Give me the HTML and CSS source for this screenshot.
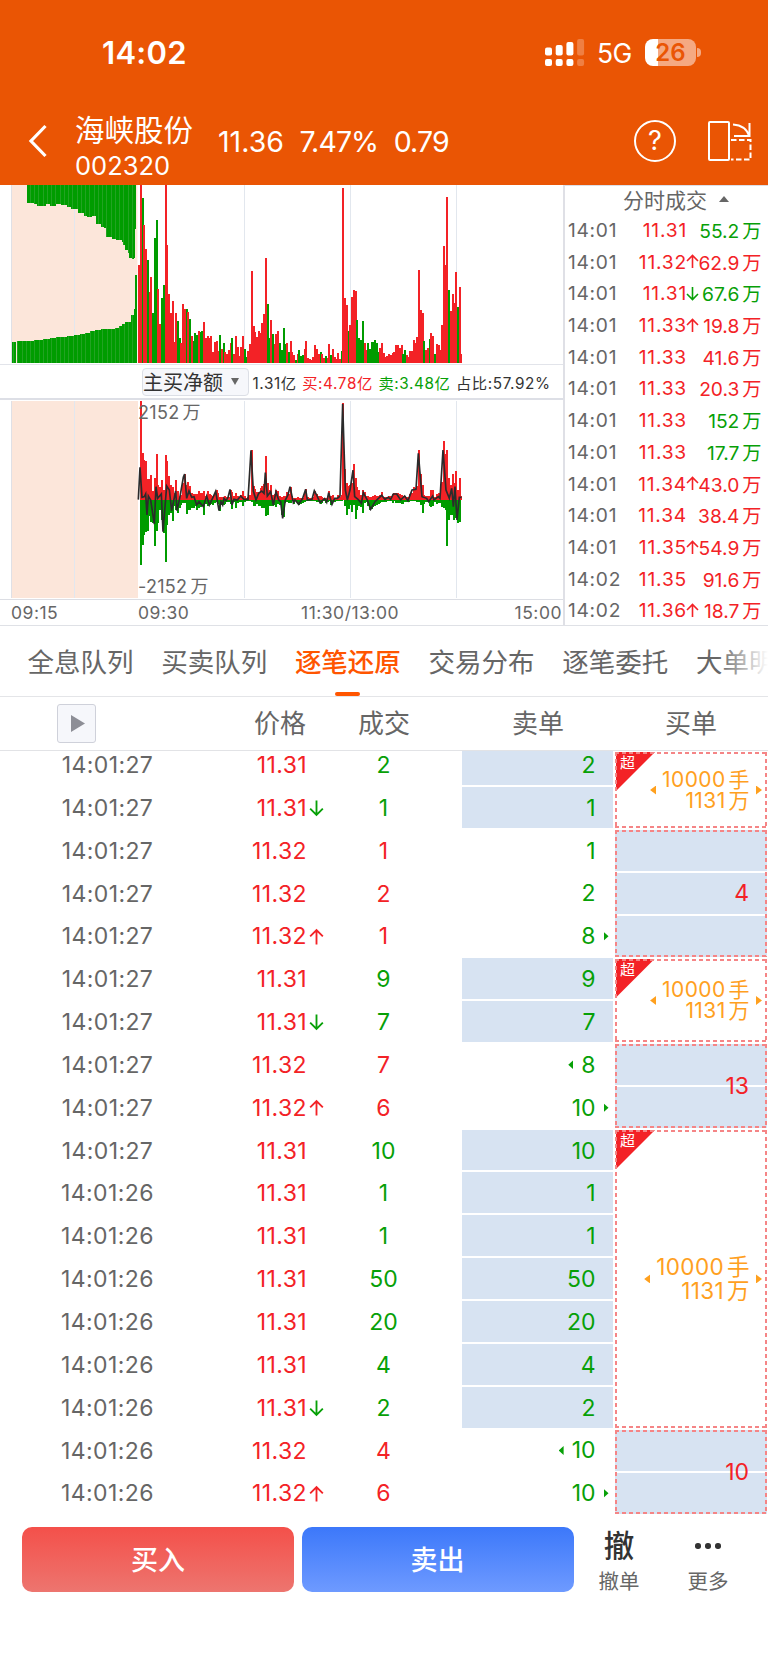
FILE: index.html
```html
<!DOCTYPE html>
<html lang="zh-CN">
<head>
    <meta charset="UTF-8">
    <meta name="viewport" content="width=device-width, initial-scale=1.0">
    <title>海峡股份 002320</title>
    <link rel="stylesheet" href="styles.css">
</head>
<body>
    <header>
        <div class="status">
            <div class="clock">14:02</div>
            <svg class="signal" width="40" height="28" viewBox="0 0 40 28" fill="#fff">
                <rect x="0" y="8.5" width="7" height="8" rx="2"/>
                <rect x="10.7" y="6" width="7" height="10.5" rx="2"/>
                <rect x="21.4" y="3" width="7" height="13.5" rx="2"/>
                <rect x="32.1" y="0" width="7" height="16.5" rx="2" opacity=".25"/>
                <rect x="0" y="20" width="7" height="7" rx="2"/>
                <rect x="10.7" y="20" width="7" height="7" rx="2"/>
                <rect x="21.4" y="20" width="7" height="7" rx="2"/>
                <rect x="32.1" y="20" width="7" height="7" rx="2" opacity=".25"/>
            </svg>
            <div class="network">5G</div>
            <div class="battery">26</div>
            <div class="battery-cap"></div>
        </div>
        <div class="nav">
            <svg class="back" width="20" height="34" viewBox="0 0 20 34"><path d="M17.5 2 L3 17 L17.5 32" fill="none" stroke="#fff" stroke-width="3.2"/></svg>
            <div class="stock">
                <div class="stock-name">海峡股份</div>
                <div class="stock-code">002320</div>
            </div>
            <div class="quote"><span>11.36</span><span class="tight">7.47%</span><span class="tight">0.79</span></div>
            <div class="help">?</div>
            <svg class="rotate" width="46" height="42" viewBox="0 0 46 42" fill="none" stroke="#fff" stroke-width="2">
                <rect x="2" y="2" width="20" height="38" rx="1"/>
                <path d="M26 4.5 C34 5 40 9 42.5 16.5 M42.5 3 V17 M27 16 H43.5"/>
                <path d="M24 20 H43.5 V39.5 H24" stroke-dasharray="5.5 2.5"/>
            </svg>
        </div>
    </header>

    <section class="market">
        <div class="charts">
            <svg id="volumeChart" width="563" height="179" viewBox="0 -3 1689 537"></svg>
            <div class="indicator">
                <button class="select">主买净额<i class="tri down"></i></button>
                <span>1.31<b>亿</b></span>
                <span class="red">买:4.78<b>亿</b></span>
                <span class="green">卖:3.48<b>亿</b></span>
                <span>占比:57.92%</span>
            </div>
            <div class="net">
                <svg id="netChart" width="563" height="198" viewBox="0 0 1689 594"></svg>
                <div class="scale top">2152<b>万</b></div>
                <div class="scale bottom">-2152<b>万</b></div>
            </div>
            <div class="axis"><span>09:15</span><span>09:30</span><span>11:30/13:00</span><span>15:00</span></div>
        </div>
        <div class="deals">
            <div class="deals-title">分时成交<i class="tri up"></i></div>
            <div id="deals"></div>
        </div>
    </section>

    <nav class="tabs">
        <a>全息队列</a>
        <a>买卖队列</a>
        <a class="active">逐笔还原</a>
        <a>交易分布</a>
        <a>逐笔委托</a>
        <a>大单明细</a>
    </nav>

    <div class="thead">
        <button class="play"><i></i></button>
        <span class="h-price">价格</span>
        <span class="h-vol">成交</span>
        <span class="h-sell">卖单</span>
        <span class="h-buy">买单</span>
    </div>
    <div class="orders">
        <div id="ticks"></div>
        <div id="buys"></div>
    </div>

    <footer>
        <button class="buy">买入</button>
        <button class="sell">卖出</button>
        <div class="tool"><div class="tool-icon">撤</div><div>撤单</div></div>
        <div class="tool more"><div class="tool-icon dots"><i></i><i></i><i></i></div><div>更多</div></div>
    </footer>

    <script src="script.js"></script>
</body>
</html>
```

FILE: styles.css
```css
* {
    box-sizing: border-box;
}
body {
    margin: 0;
    width: 768px;
    height: 1665px;
    overflow: hidden;
    background: #fff;
    color: #666;
    font-family: Inter, "Noto Sans CJK SC", sans-serif;
}
b, i {
    font-weight: inherit;
    font-style: normal;
}
button {
    padding: 0;
    border: none;
    font-family: inherit;
    color: inherit;
}
svg {
    display: block;
}
.red {
    color: #f32226;
}
.green {
    color: #07a007;
}
header {
    height: 185px;
    background: #ea5504;
    color: #fff;
}
.status {
    display: flex;
    align-items: center;
    height: 97px;
    padding: 8px 0 0 102px;
}
.clock {
    width: 443px;
    font-size: 31px;
    font-weight: 600;
    letter-spacing: 0.3px;
}
.network {
    width: 48px;
    margin-left: 12px;
    font-size: 26.5px;
    letter-spacing: -0.5px;
}
.battery {
    width: 51px;
    height: 27px;
    border-radius: 8px;
    background: linear-gradient(90deg, #fff 13px, #f5a982 13px);
    color: #ea5504;
    font-size: 24px;
    font-weight: 600;
    line-height: 27px;
    text-align: center;
}
.battery-cap {
    width: 4px;
    height: 9px;
    margin-left: 1px;
    border-radius: 0 4px 4px 0;
    background: #f5a982;
}
.nav {
    display: flex;
    align-items: center;
    height: 88px;
    padding-left: 28px;
}
.stock {
    width: 142px;
    margin: 14px 0 0 27px;
    line-height: 35.5px;
}
.stock-name {
    font-size: 29.5px;
}
.stock-code {
    font-size: 25.5px;
}
.quote {
    display: flex;
    gap: 15.5px;
    width: 417px;
    padding-left: 1px;
    font-size: 28.5px;
}
.quote .tight {
    letter-spacing: -0.9px;
}
.help {
    width: 42px;
    height: 42px;
    border: 2px solid #fff;
    border-radius: 50%;
    font-size: 27px;
    line-height: 38px;
    text-align: center;
}
.rotate {
    margin-left: 31px;
}

/* charts */
.market {
    display: flex;
    height: 441px;
    border-bottom: 1px solid #dfe1e6;
}
.charts {
    width: 563px;
}
.charts rect {
    shape-rendering: crispEdges;
}
.indicator {
    display: flex;
    align-items: center;
    gap: 5.5px;
    height: 36px;
    padding-left: 142px;
    border-top: 1px solid #e2e4ea;
    border-bottom: 2px solid #dddfe6;
    color: #333;
    font-size: 15.3px;
    letter-spacing: 0.6px;
    white-space: nowrap;
}
.indicator .red {
    color: #f32226;
}
.indicator .green {
    color: #07a007;
}
.select {
    display: flex;
    align-items: center;
    justify-content: space-between;
    width: 107px;
    height: 28px;
    margin-right: -2px;
    padding-right: 9px;
    border: 1px solid #dcdfe6;
    border-radius: 4px;
    background: #f6f7fb;
    font-size: 20px;
}
.tri {
    width: 8px;
    height: 7px;
    background: #666;
}
.tri.down {
    clip-path: polygon(0 0, 100% 0, 50% 100%);
}
.tri.up {
    width: 10px;
    height: 6px;
    clip-path: polygon(50% 0, 100% 100%, 0 100%);
}
.net {
    position: relative;
    height: 200px;
    padding-top: 1px;
    border-bottom: 1px solid #dcdee4;
}
.scale {
    position: absolute;
    left: 138px;
    font-size: 18px;
    line-height: 20px;
    letter-spacing: 0.3px;
}
.scale b {
    margin-left: 3px;
}
.scale.top {
    top: 3px;
}
.scale.bottom {
    bottom: 2px;
}
.axis {
    display: grid;
    grid-template-columns: 127px 130px 131px 1fr;
    padding: 0 1px 0 11px;
    font-size: 17.5px;
    line-height: 26px;
    letter-spacing: 0.5px;
}
.axis span:nth-child(3) {
    text-align: right;
}
.axis span:last-child {
    text-align: right;
}
.deals {
    width: 205px;
    border-top: 1px solid #dcdee6;
    border-left: 2px solid #dfe0e6;
}
.deals-title {
    display: flex;
    align-items: center;
    gap: 12px;
    height: 28px;
    padding: 0 0 2px 58px;
    font-size: 21px;
}
.deal {
    display: grid;
    grid-template-columns: 51px 67px 14px 1fr;
    align-items: center;
    height: 31.72px;
    padding: 0 6.5px 0 3px;
    font-size: 19.2px;
    white-space: nowrap;
}
.deal span:nth-child(1) {
    letter-spacing: 0.7px;
}
.deal span:nth-child(2) {
    margin-right: -1px;
    letter-spacing: 0.8px;
}
.deal span:nth-child(2), .deal span:last-child {
    text-align: right;
}
.deal span:last-child {
    margin-left: -8px;
}
.deal b {
    margin-left: 3px;
}
.arrow {
    fill: none;
    stroke: currentColor;
    stroke-width: 1.6;
}

/* tabs */
.tabs {
    position: relative;
    display: flex;
    gap: 27.7px;
    height: 71px;
    padding-left: 27.5px;
    border-bottom: 1px solid #e4e5e8;
    overflow: hidden;
    font-size: 26.5px;
    line-height: 73px;
    white-space: nowrap;
}
.tabs::after {
    content: "";
    position: absolute;
    top: 0;
    right: 0;
    width: 50px;
    height: 70px;
    background: linear-gradient(90deg, transparent, #fff);
}
.tabs a {
    display: flex;
    flex-direction: column;
    align-items: center;
}
.tabs .active {
    color: #ff5500;
    font-weight: 500;
}
.tabs .active::after {
    content: "";
    width: 25px;
    height: 4px;
    margin-top: -7px;
    border-radius: 2px;
    background: #ff5500;
}
.thead {
    display: flex;
    align-items: center;
    height: 54px;
    padding-left: 57px;
    border-bottom: 1px solid #e2e3e6;
    font-size: 26px;
    line-height: 38px;
}
.play {
    display: flex;
    align-items: center;
    justify-content: center;
    width: 39px;
    height: 39px;
    border: 1px solid #cfd1da;
    border-radius: 3px;
    background: #f6f7fb;
}
.play i {
    width: 14px;
    height: 17px;
    margin-left: 3px;
    background: #8d8e96;
    clip-path: polygon(0 0, 100% 50%, 0 100%);
}
.h-price {
    margin-left: 158px;
}
.h-vol {
    margin-left: 52px;
}
.h-sell {
    margin-left: 102px;
}
.h-buy {
    margin-left: 101px;
}

/* order queue */
.orders {
    display: flex;
    height: 764px;
    overflow: hidden;
    font-size: 23px;
}
#ticks {
    width: 613px;
    margin-top: -8px;
}
.tick {
    display: grid;
    grid-template-columns: 215px 91px 36px 83px 37px 151px;
    grid-template-rows: 42.85px;
    line-height: 45px;
}
.tick .time {
    letter-spacing: 0.4px;
    text-align: center;
}
.tick .price {
    margin-right: -1px;
    letter-spacing: 0.4px;
    text-align: right;
}
.tick .dir {
    display: flex;
    align-items: center;
    padding: 2px 0 0 3px;
}
.tick .vol {
    text-align: center;
}
.tick .amount {
    grid-column: 6;
    display: flex;
    align-items: center;
    justify-content: flex-end;
    margin: 1px 0.5px 1px 0;
    padding: 1px 4px 0 0;
    line-height: 38px;
}
.tick .amount.same {
    background: #d7e3f2;
}
.amount i {
    width: 5px;
    height: 9px;
    background: currentColor;
}
.amount .from {
    margin-right: 8px;
    clip-path: polygon(0 50%, 100% 0, 100% 100%);
}
.amount .to {
    margin-left: 8px;
    clip-path: polygon(0 0, 100% 50%, 0 100%);
}
.amount .none {
    visibility: hidden;
}
#buys {
    width: 152px;
    margin-left: 2px;
    padding-top: 1px;
}
.group {
    padding-bottom: 2px;
}
.box {
    position: relative;
    display: flex;
    flex-direction: column;
    gap: 2px;
    height: 100%;
}
.box::after {
    content: "";
    position: absolute;
    inset: 0;
    background:
        repeating-linear-gradient(90deg, #f58586 0 4px, transparent 4px 7px) 0 0 / 100% 2px no-repeat,
        repeating-linear-gradient(90deg, #f58586 0 4px, transparent 4px 7px) 0 100% / 100% 2px no-repeat,
        repeating-linear-gradient(#f58586 0 4px, transparent 4px 7px) 0 0 / 2px 100% no-repeat,
        repeating-linear-gradient(#f58586 0 4px, transparent 4px 7px) 100% 0 / 2px 100% no-repeat;
}
.cell {
    flex: 1;
    background: #d7e3f2;
}
.total {
    position: absolute;
    top: 50%;
    right: 18px;
    transform: translateY(-50%);
}
.flag {
    position: absolute;
    top: 0;
    left: 1px;
    width: 39px;
    height: 39px;
    padding: 3px 0 0 4px;
    background: #f32226;
    clip-path: polygon(0 0, 100% 0, 0 100%);
    color: #fff;
    font-size: 15px;
    line-height: 16px;
}
.super {
    display: flex;
    align-items: center;
    justify-content: flex-end;
    gap: 6px;
    flex: 1;
    padding-right: 5px;
    color: #ffa01e;
    font-size: 21px;
    line-height: 21.5px;
    letter-spacing: 0.4px;
    text-align: right;
}
.super.large {
    font-size: 22.5px;
    line-height: 23.5px;
}
.super b {
    margin-left: 3px;
}
.super i {
    width: 6px;
    height: 9px;
    background: currentColor;
}
.super .from {
    clip-path: polygon(0 50%, 100% 0, 100% 100%);
}
.super .to {
    clip-path: polygon(0 0, 100% 50%, 0 100%);
}

footer {
    display: flex;
    height: 77px;
    padding: 12px 0 0 22px;
}
footer button {
    width: 272px;
    height: 65px;
    margin-right: 7.5px;
    padding-bottom: 3px;
    border-radius: 10px;
    color: #fff;
    font-size: 27px;
    font-weight: 500;
}
.buy {
    background: linear-gradient(#f4504a, #ed756f);
}
.sell {
    background: linear-gradient(#3c78fa, #6e9aff);
}
.tool {
    width: 42px;
    margin-left: 17px;
    font-size: 20.5px;
    line-height: 32px;
    text-align: center;
    white-space: nowrap;
}
.tool.more {
    margin-left: 47px;
}
.tool-icon {
    height: 39px;
    color: #333;
    font-size: 30.5px;
    font-weight: 500;
    line-height: 38px;
}
.dots {
    display: flex;
    align-items: center;
    justify-content: center;
    gap: 4.5px;
    padding-bottom: 1px;
}
.dots i {
    width: 5.5px;
    height: 5.5px;
    border-radius: 50%;
    background: #333;
}
```

FILE: script.js
```js
const RED = "#f32226";
const GREEN = "#009c00";
const STEP = 5.284;
const OPEN = 417;

// volume per minute, negative = green bar
const volume = [
    295, 540, -495, 413, 342, -310, 213, 259, -149, -375, -430, 221, 117, -194, -233, 540, 354, 207, 149, 186,
    63, 149, -127, -74, 60, 176, 163, -162, 153, -133, 82, -67, -89, -83, 97, -92, -96, 124, 74, 82,
    75, 81, 32, 62, 67, 37, -84, 41, -60, 33, 28, 40, 60, -74, 26, 82, 49, 21, 49, 82,
    -42, -18, 35, 56, 275, 111, 93, 78, 95, 91, 119, 148, 315, -176, -75, 129, -87, 57, 87, 96,
    -60, -40, -106, -57, 60, -34, 65, 33, 25, -9, 26, -40, -22, -23, 42, 67, 15, 12, 10, 19,
    54, 41, 27, -33, 27, 14, -22, 15, 58, -23, 42, 18, 12, 30, 13, -35, 525, 195, 173, -95,
    115, 197, 219, 217, -128, -76, -68, -125, 60, 39, -60, -41, -63, -63, -69, -60, -34, 44, 61, 29,
    19, 20, 26, 25, 31, 34, 55, 55, 45, 54, -27, -39, 24, 19, 35, 37, 69, 61, 78, 279,
    160, 151, -66, 39, 45, -71, 90, 82, -28, 56, 53, 38, 115, 351, 295, 497, -219, 156, 207, 180,
    272, -169, 229, 27
];
const buyIn = [
    0, 295, 139, 118, 115, 62, 62, 74, 27, 65, 137, 45, 39, 58, 30, 135, 117, 70, 45, 38,
    20, 58, 25, 12, 15, 50, 78, 43, 54, 42, 20, 18, 18, 18, 26, 20, 21, 26, 10, 26,
    18, 15, 10, 20, 28, 20, 8, 8, 7, 10, 8, 8, 30, 22, 10, 20, 12, 8, 15, 27,
    10, 6, 8, 15, 150, 42, 32, 24, 24, 36, 40, 48, 130, 50, 28, 44, 15, 18, 28, 25,
    12, 8, 10, 10, 22, 16, 38, 12, 5, 5, 8, 4, 5, 6, 18, 32, 8, 5, 4, 8,
    26, 18, 12, 12, 8, 5, 5, 6, 25, 12, 14, 6, 5, 14, 8, 15, 290, 91, 50, 40,
    45, 50, 106, 65, 38, 28, 15, 30, 22, 12, 10, 8, 8, 12, 14, 12, 10, 15, 24, 8,
    8, 8, 10, 10, 16, 20, 20, 20, 18, 14, 10, 10, 8, 8, 16, 20, 38, 35, 40, 150,
    78, 45, 15, 12, 12, 12, 28, 30, 8, 18, 20, 20, 53, 177, 138, 150, 66, 45, 78, 50,
    87, 28, 64, 10
];
const sellOut = [
    0, 196, 135, 107, 96, 93, 50, 68, 70, 138, 95, 70, 30, 60, 100, 186, 75, 45, 40, 65,
    20, 30, 40, 25, 15, 10, 10, 43, 30, 30, 25, 25, 18, 30, 25, 22, 20, 45, 12, 20,
    15, 14, 16, 10, 8, 12, 35, 15, 15, 12, 8, 8, 14, 27, 8, 25, 10, 8, 8, 20,
    6, 5, 5, 5, 6, 18, 18, 14, 20, 18, 25, 25, 48, 47, 20, 18, 20, 15, 22, 12,
    15, 45, 52, 10, 8, 10, 10, 5, 14, 4, 12, 16, 14, 10, 6, 5, 4, 4, 5, 5,
    5, 6, 6, 12, 10, 5, 10, 6, 5, 15, 6, 6, 5, 5, 4, 4, 0, 18, 45, 28,
    15, 36, 15, 58, 30, 20, 22, 40, 10, 8, 20, 30, 28, 22, 20, 15, 12, 10, 8, 6,
    6, 5, 5, 4, 9, 4, 10, 9, 10, 14, 12, 8, 6, 6, 4, 4, 4, 5, 6, 8,
    15, 40, 12, 6, 8, 20, 22, 18, 8, 12, 10, 10, 22, 25, 32, 138, 60, 45, 47, 62,
    55, 70, 68, 0
];
const netLine = "415,329 420,232 426,322 433,320 437,312 441,375 445,318 452,330 463,402 468,290 473,325 484,312 489,425 500,288 508,300 515,362 527,303 531,362 540,320 550,262 554,252 560,325 567,303 575,322 582,320 590,345 597,335 610,350 620,318 628,345 640,320 647,304 657,362 663,335 668,345 672,325 678,332 684,322 690,298 696,345 702,328 712,330 722,318 732,328 744,328 753,181 760,303 768,330 776,310 785,303 792,310 796,248 802,318 812,305 820,345 828,305 836,330 842,335 848,385 856,330 864,315 870,290 880,338 885,330 896,343 908,325 917,298 922,330 936,328 943,302 950,315 960,338 974,326 980,337 986,308 996,343 1004,325 1012,325 1020,318 1028,42 1036,300 1042,330 1050,300 1059,240 1064,320 1074,328 1084,340 1090,308 1102,330 1112,358 1125,335 1145,316 1155,328 1165,322 1172,328 1180,312 1190,312 1202,330 1214,318 1224,332 1236,300 1248,298 1255,190 1266,320 1280,325 1286,335 1298,318 1302,330 1315,320 1320,325 1329,180 1338,300 1348,325 1355,295 1360,350 1365,290 1371,390 1378,322 1385,322";

// call auction outline: [x, y] steps
const auctionTop = [[81, 50], [102, 53], [110, 59], [122, 61], [136, 55], [150, 61], [164, 55], [184, 56], [200, 62], [212, 68], [235, 81], [250, 90], [260, 93], [278, 90], [291, 113], [300, 122], [310, 127], [320, 153], [334, 158], [348, 163], [364, 169], [370, 177], [376, 191], [384, 202], [388, 217], [395, 218], [400, 215], [404, 130]];
const auctionBottom = [[35, 63], [52, 65], [75, 67], [102, 69], [128, 72], [150, 74], [165, 79], [190, 78], [200, 81], [222, 84], [240, 87], [258, 90], [270, 97], [285, 100], [304, 103], [345, 106], [356, 111], [366, 118], [375, 123], [392, 127], [394, 144], [399, 161], [404, 263]];

function rect(x, y, w, h, fill) {
    return `<rect x="${x.toFixed(1)}" y="${y}" width="${w}" height="${h}" fill="${fill}"/>`;
}

function grid(y, h) {
    let s = rect(33, y, 382, h, "#fce6da") + rect(33, y, 3, h, "#dfe0e6");
    [223, 732, 1050, 1368].forEach(x => s += rect(x, y, 3, h, "#e2e7ee"));
    return s;
}

function levelAt(levels, x) {
    let v = levels[0][1];
    levels.forEach(l => { if (x >= l[0]) v = l[1]; });
    return v;
}

function drawVolume() {
    const base = 531;
    let s = grid(-3, base + 3) + rect(411, -3, 4, base + 3, "#fff4ee");
    for (let x = 81; x < 408; x += 4.25) {
        const h = levelAt(auctionTop, x + 2) + 3;
        s += rect(x, -3, 5, h, GREEN);
        if (Math.round(x / 4.25) % 3 === 0) s += rect(x, -3, 3, h, "#22a322");
    }
    for (let x = 35; x < 408; x += 4.25) {
        if (x > 45 && x < 51) continue;
        const h = levelAt(auctionBottom, x + 2);
        s += rect(x, base - h, 5, h, GREEN);
        if (Math.round(x / 4.25) % 3 === 0) s += rect(x, base - h, 3, h, "#22a322");
    }
    volume.forEach((v, i) => {
        const h = Math.min(Math.abs(v), base + 3);
        s += rect(OPEN - 2.8 + i * STEP, base - h, 6, h, v > 0 ? RED : GREEN);
    });
    document.getElementById("volumeChart").innerHTML = s;
}

function drawNet() {
    const zero = 296;
    let s = grid(0, 591);
    buyIn.forEach((v, i) => {
        const x = OPEN - 2.8 + i * STEP;
        s += rect(x, zero - v, 6, v, RED) + rect(x, zero, 6, sellOut[i], GREEN);
    });
    s += `<polyline points="${netLine}" transform="translate(0 -33)" fill="none" stroke="#2b2b2b" stroke-width="5"/>`;
    document.getElementById("netChart").innerHTML = s;
}

function arrow(dir, w, h) {
    if (!dir) return "";
    const d = dir === "u" ? "M6.5 14 V1.5 M1 7 L6.5 1.5 L12 7" : "M6.5 1 V13.5 M1 8 L6.5 13.5 L12 8";
    return `<svg class="arrow ${dir === "u" ? "red" : "green"}" width="${w}" height="${h}" viewBox="0 0 13 15"><path d="${d}"/></svg>`;
}

// time, price, direction, amount, colour
const deals = [
    ["14:01", "11.31", "", "55.2", "green"],
    ["14:01", "11.32", "u", "62.9", "red"],
    ["14:01", "11.31", "d", "67.6", "green"],
    ["14:01", "11.33", "u", "19.8", "red"],
    ["14:01", "11.33", "", "41.6", "red"],
    ["14:01", "11.33", "", "20.3", "red"],
    ["14:01", "11.33", "", "152", "green"],
    ["14:01", "11.33", "", "17.7", "green"],
    ["14:01", "11.34", "u", "43.0", "red"],
    ["14:01", "11.34", "", "38.4", "red"],
    ["14:01", "11.35", "u", "54.9", "red"],
    ["14:02", "11.35", "", "91.6", "red"],
    ["14:02", "11.36", "u", "18.7", "red"]
];

// time, price, direction, volume, colour, sell order, state (same / from / to)
const ticks = [
    ["27", "11.31", "", 2, "green", 2, "same"],
    ["27", "11.31", "d", 1, "green", 1, "same"],
    ["27", "11.32", "", 1, "red", 1, ""],
    ["27", "11.32", "", 2, "red", 2, ""],
    ["27", "11.32", "u", 1, "red", 8, "to"],
    ["27", "11.31", "", 9, "green", 9, "same"],
    ["27", "11.31", "d", 7, "green", 7, "same"],
    ["27", "11.32", "", 7, "red", 8, "from"],
    ["27", "11.32", "u", 6, "red", 10, "to"],
    ["27", "11.31", "", 10, "green", 10, "same"],
    ["26", "11.31", "", 1, "green", 1, "same"],
    ["26", "11.31", "", 1, "green", 1, "same"],
    ["26", "11.31", "", 50, "green", 50, "same"],
    ["26", "11.31", "", 20, "green", 20, "same"],
    ["26", "11.31", "", 4, "green", 4, "same"],
    ["26", "11.31", "d", 2, "green", 2, "same"],
    ["26", "11.32", "", 4, "red", 10, "from"],
    ["26", "11.32", "u", 6, "red", 10, "to"]
];

// rows covered by each buy order, total is empty for the super orders
const buys = [
    { rows: 2, height: 78 },
    { rows: 3, total: 4 },
    { rows: 2 },
    { rows: 2, total: 13 },
    { rows: 7, large: true },
    { rows: 2, total: 10 }
];

function drawDeals() {
    document.getElementById("deals").innerHTML = deals.map(d => `
        <div class="deal">
            <span>${d[0]}</span><span class="red">${d[1]}</span><span>${arrow(d[2], 13, 15)}</span><span class="${d[4]}">${d[3]}<b>万</b></span>
        </div>`).join("");
}

function drawTicks() {
    document.getElementById("ticks").innerHTML = ticks.map(t => `
        <div class="tick">
            <span class="time">14:01:${t[0]}</span>
            <span class="price red">${t[1]}</span>
            <span class="dir">${arrow(t[2], 15, 18)}</span>
            <span class="vol ${t[4]}">${t[3]}</span>
            <span class="amount green ${t[6] === "same" ? "same" : ""}">${t[6] === "from" ? '<i class="from"></i>' : ""}${t[5]}<i class="to ${t[6] === "to" ? "" : "none"}"></i></span>
        </div>`).join("");
}

function drawBuys() {
    document.getElementById("buys").innerHTML = buys.map(g => {
        const height = g.height || g.rows * 42.85;
        const body = g.total
            ? '<div class="cell"></div>'.repeat(g.rows) + `<span class="total red">${g.total}</span>`
            : `<div class="super ${g.large ? "large" : ""}"><i class="from"></i><div>10000<b>手</b><br>1131<b>万</b></div><i class="to"></i></div><span class="flag">超</span>`;
        return `<div class="group" style="height:${height}px"><div class="box">${body}</div></div>`;
    }).join("");
}

drawVolume();
drawNet();
drawDeals();
drawTicks();
drawBuys();
```
